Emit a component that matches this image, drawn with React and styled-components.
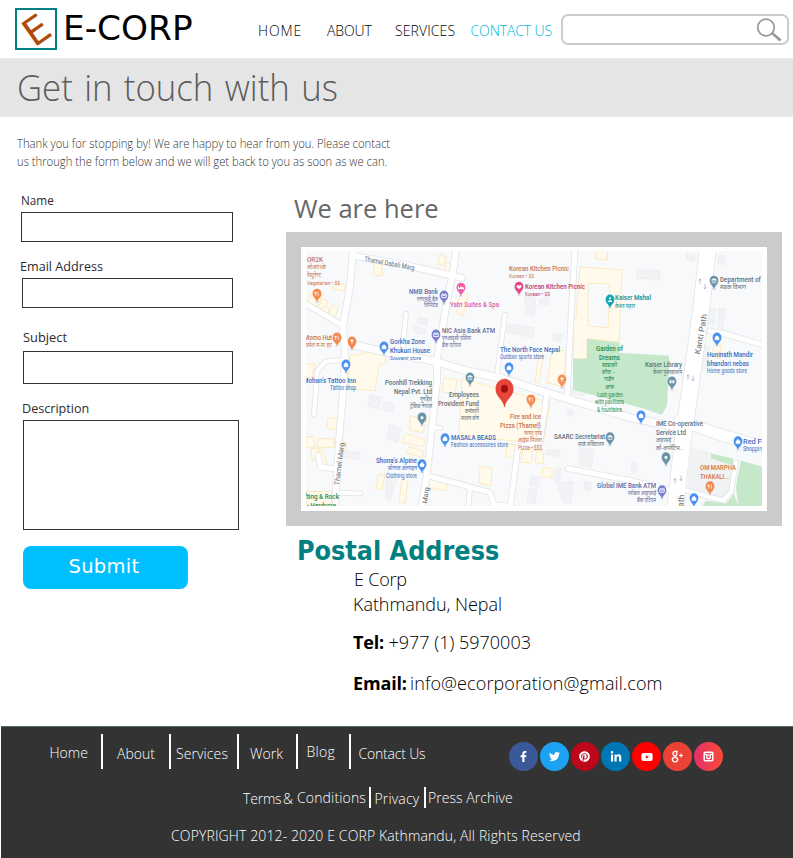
import React from "react";
import styled, { createGlobalStyle } from "styled-components";
import {
  FaFacebookF,
  FaTwitter,
  FaPinterest,
  FaLinkedinIn,
  FaYoutube,
} from "react-icons/fa";

const GlobalStyle = createGlobalStyle`
  *, *::before, *::after { box-sizing: border-box; }
  body { margin: 0; background: #fff; overflow: hidden; }
`;

const Page = styled.div`
  width: 793px;
  height: 858px;
  display: flex;
  flex-direction: column;
  background: #fff;
  color: #111;
  font-family: "Open Sans", "Noto Sans", sans-serif;
  overflow: hidden;
`;

/* ---------- header ---------- */

const Header = styled.header`
  flex: none;
  height: 58px;
  display: flex;
  align-items: flex-start;
`;

const LogoMark = styled.svg`
  flex: none;
  width: 42px;
  height: 42px;
  margin: 8px 0 0 15px;
`;

const Brand = styled.div`
  flex: none;
  width: 195px;
  margin: 9px 0 0 6px;
  font: 33px/40px "DejaVu Sans", sans-serif;
  color: #000;
  white-space: nowrap;
  transform: scaleX(1.04);
  transform-origin: left;
`;

const HeaderNav = styled.nav`
  flex: none;
  width: 303px;
  display: flex;
  padding-top: 21px;
`;

const HeaderLink = styled.a`
  flex: none;
  width: ${(p) => p.$w}px;
  font-size: 14px;
  line-height: 20px;
  font-weight: 300;
  letter-spacing: ${(p) => p.$ls}px;
  color: ${(p) => (p.$active ? "#00b7dc" : "#000")};
  white-space: nowrap;
`;

const SearchBox = styled.div`
  flex: none;
  width: 228px;
  height: 31px;
  margin-top: 14px;
  border: 2px solid #ccc;
  border-radius: 7px;
  display: flex;
  justify-content: flex-end;
  align-items: flex-start;
  padding: 2px 5px 0 0;
`;

const Banner = styled.div`
  flex: none;
  height: 59px;
  padding: 7px 0 0 17px;
  background: #e5e5e5;
  border-top: 1px solid #eaeaea;
  border-bottom: 1px solid #ededed;
`;

const BannerTitle = styled.h1`
  margin: 0;
  font-size: 36px;
  line-height: 44px;
  font-weight: 300;
  word-spacing: 2.4px;
  color: #5c5c5c;
  white-space: nowrap;
  transform: scaleX(0.965);
  transform-origin: left;
`;

/* ---------- main ---------- */

const Main = styled.main`
  flex: none;
  height: 609px;
  display: flex;
`;

const LeftColumn = styled.section`
  flex: none;
  width: 286px;
  padding-top: 18px;
`;

const Intro = styled.p`
  margin: 0 0 21px 17px;
  width: 440px;
  height: 35px;
  font-size: 13px;
  line-height: 17.5px;
  font-weight: 300;
  color: #333;
  white-space: nowrap;
  transform: scaleX(0.866);
  transform-origin: left;
`;

const Field = styled.div`
  height: ${(p) => p.$h}px;
  padding-left: ${(p) => p.$x}px;
`;

const FieldLabel = styled.label`
  display: block;
  height: ${(p) => p.$h}px;
  margin-left: ${(p) => p.$x}px;
  font-size: 13px;
  line-height: 18px;
  color: #2b2b2b;
  white-space: nowrap;
  transform: scaleX(${(p) => p.$fit});
  transform-origin: left;
`;

const TextInput = styled.input`
  display: block;
  width: ${(p) => p.$w}px;
  height: ${(p) => p.$h}px;
  border: 1px solid #333;
  border-radius: 0;
  background: #fff;
`;

const TextArea = styled.textarea`
  display: block;
  width: 216px;
  height: 110px;
  border: 1px solid #333;
  border-radius: 0;
  background: #fff;
  resize: none;
`;

const SubmitButton = styled.button`
  display: block;
  width: 165px;
  height: 43.5px;
  margin-left: 23px;
  padding: 0 3px 0 0;
  border: 0;
  border-radius: 8px;
  background: #00bfff;
  color: #fff;
  font: 19.5px/42px "DejaVu Sans", sans-serif;
  letter-spacing: 0.3px;
`;

const RightColumn = styled.section`
  flex: none;
  width: 507px;
  padding-top: 73px;
`;

const MapHeading = styled.h2`
  margin: 0 0 0 8px;
  height: 42px;
  font-size: 26px;
  line-height: 36px;
  font-weight: 400;
  color: #666;
  transform: scaleX(0.98);
  transform-origin: left;
`;

const MapFrame = styled.div`
  width: 496px;
  height: 294px;
  border: 15px solid #cbcbcb;
  background: #fff;
  padding: 3.5px 5px 0;
`;

const MapDrawing = styled.svg`
  display: block;
  width: 456px;
  height: 255.5px;
`;

const PostalHeading = styled.h3`
  margin: 9px 0 0 11px;
  height: 32px;
  font: bold 26px/32px "DejaVu Sans", sans-serif;
  color: #008080;
  white-space: nowrap;
  transform: scaleX(0.923);
  transform-origin: left;
`;

const ContactRow = styled.div`
  display: flex;
  height: ${(p) => p.$h}px;
  padding-left: ${(p) => p.$x}px;
  font-size: 18px;
  line-height: 24px;
  font-weight: 300;
  letter-spacing: ${(p) => p.$ls || 0}px;
  color: #000;
  white-space: nowrap;
`;

const ContactKey = styled.strong`
  flex: none;
  width: ${(p) => p.$w}px;
  font-weight: 700;
  letter-spacing: -0.15px;
`;

/* ---------- footer ---------- */

const Footer = styled.footer`
  flex: none;
  height: 132px;
  margin-left: 1px;
  background: #333;
  color: #fff;
  border-top: 1px solid #566;
`;

const FooterTop = styled.div`
  display: flex;
  height: 60px;
  padding-top: 7px;
`;

const FooterLinks = styled.div`
  display: flex;
  width: 508px;
`;

const FooterLink = styled.a`
  flex: none;
  width: ${(p) => p.$w}px;
  padding: ${(p) => p.$top}px 0 0 ${(p) => p.$x}px;
  font-size: 14px;
  line-height: 20px;
  font-weight: 300;
  letter-spacing: ${(p) => p.$ls || 0}px;
  white-space: nowrap;
`;

const Divider = styled.span`
  flex: none;
  width: 2px;
  height: ${(p) => p.$h}px;
  background: #fff;
`;

const SocialRow = styled.div`
  display: flex;
  gap: 2px;
  padding-top: 8px;
`;

const SocialBadge = styled.a`
  flex: none;
  width: 28.8px;
  height: 29px;
  border-radius: 50%;
  background: ${(p) => p.$bg};
  color: #fff;
  display: flex;
  align-items: center;
  justify-content: center;
`;

const LegalLinks = styled.div`
  display: flex;
  height: 39px;
  padding-left: 241px;
`;

const Copyright = styled.div`
  padding-left: 170px;
  font-size: 14px;
  line-height: 20px;
  font-weight: 300;
  letter-spacing: 0.12px;
  white-space: nowrap;
`;

/* ---------- map ---------- */

const ROADS = [
  [6, "353,248 350,285 343,325 345,352 344,380 340,427 337,470 335,510"],
  [6, "355,255 410,265 462,277"],
  [6, "456,248 453,272 448,295 437,358 437,380 432,427 427,473 421,510"],
  [5, "300,300 318,310 343,325"],
  [7, "345,342 385,351 437,361 462,369 503,378 547,392 630,417 675,426"],
  [11, "680,420 720,434 766,447"],
  [4, "406,313 402,353"],
  [4, "505,314 497,374"],
  [5, "575,248 571,317 568,380 567,396"],
  [5, "710,330 725,333 766,345"],
  [4, "345,359 325,361 317,371 314,414"],
  [5, "318,455 321,467 335,468"],
  [4, "336,492 360,493"],
  [5, "427,475 465,485 490,492 494,504 512,506"],
  [4, "470,488 468,510"],
  [5, "547,392 540,442 518,446 510,508"],
  [5, "568,468 630,480 676,491"],
  [4, "686,490 723,500 731,492 736,462"],
  [4, "433,427 440,427"],
];

const YELLOW = [
  "375,257 382,258 382,275 373,274",
  "440,253 446,256 443,265 438,263",
  "446,262 453,263 451,273 444,271",
  "322,298 328,300 324,310 318,307",
  "324,305 330,308 326,318 320,315",
  "332,304 338,307 334,320 328,316",
  "311,291 322,295 316,306 308,302",
  "335,282 346,284 344,290 333,288",
  "350,355 385,349 386,362 379,364 375,390 347,388",
  "304,363 315,363 312,377 304,377",
  "328,417 340,419 338,429 327,427",
  "306,436 314,436 314,447 306,447",
  "318,438 334,438 334,447 317,447",
  "311,448 318,448 318,459 312,459",
  "319,447 323,450 327,464 322,465",
  "343,442 346,442 345,451 341,451",
  "410,415 427,419 423,432 410,429",
  "406,433 425,439 423,446 402,442",
  "409,446 424,451 423,457 406,452",
  "378,474 385,474 382,489 376,488",
  "402,479 408,480 405,503 399,501",
  "428,476 448,480 446,490 427,487",
  "444,377 457,379 455,393 442,391",
  "462,378 550,402 543,443 459,435",
  "507,443 517,445 516,458 506,456",
  "523,446 532,448 531,462 521,462",
  "537,449 544,450 543,463 535,462",
  "480,466 492,467 491,485 479,483",
  "543,467 552,468 552,477 542,476",
  "539,353 543,354 539,382 535,381",
  "552,349 566,350 564,386 547,382",
  "597,248 608,248 607,259 596,258",
  "580,266 622,269 619,341 587,338 587,358 573,358 574,330 570,328 571,317 576,317",
  "714,343 721,345 720,358 712,355",
  "460,290 468,294 463,315 457,312",
  "306,491 332,491 332,504 306,504",
];

const GREY = [
  "419,316 428,319 427,325 417,322",
  "414,325 426,328 425,334 414,331",
  "370,394 382,397 379,409 368,405",
  "384,401 394,403 392,411 382,409",
  "390,424 401,428 397,442 387,438",
  "342,450 360,452 360,459 342,457",
  "387,476 397,478 390,500 385,496",
  "525,295 536,297 534,315 526,312",
  "540,298 548,298 548,304 539,303",
  "508,323 534,327 533,337 506,331",
  "554,333 562,334 562,341 553,339",
  "572,386 586,387 584,395 572,393",
  "568,409 574,411 572,416 567,414",
  "580,447 594,449 591,467 579,465",
  "546,449 560,450 560,456 546,454",
  "556,467 561,468 559,482 554,480",
  "531,475 540,477 538,487 530,485",
  "529,488 537,490 535,503 527,501",
  "557,483 573,481 571,503 563,502",
  "585,481 591,482 590,490 584,489",
  "637,269 660,270 660,279 637,277",
  "687,253 695,254 694,260 687,259",
  "719,254 725,255 724,264 718,262",
  "707,307 716,308 714,324 706,322",
  "719,307 725,308 722,328 718,326",
  "702,343 709,346 708,369 700,367",
  "632,461 637,462 635,473 631,471",
  "692,448 730,458 731,487 722,497 688,487",
];

const PINS = [
  [317, 293, "#f4884e", "fork"],
  [337, 337, "#f4884e", "fork"],
  [352, 341, "#f4884e", "cup"],
  [384, 346, "#4a90ee", "bag"],
  [346, 364, "#4a90ee", "bag"],
  [444, 295, "#7b80cf", "card"],
  [461, 287, "#ef5fab", "bed"],
  [436, 334, "#7b80cf", "card"],
  [519, 286, "#ea4583", "heart"],
  [610, 299, "#12a6b4", "person"],
  [714, 280, "#6c93a7", "bank"],
  [717, 337, "#4a90ee", "bag"],
  [509, 367, "#4a90ee", "bag"],
  [470, 377, "#6c93a7", "bank"],
  [562, 379, "#f6935b", "cup"],
  [531, 399, "#f4884e", "fork"],
  [422, 417, "#6c93a7", "dot"],
  [445, 438, "#4a90ee", "bag"],
  [422, 464, "#4a90ee", "bag"],
  [610, 437, "#6c93a7", "bank"],
  [672, 381, "#6c93a7", "book"],
  [641, 415, "#4a90ee", "bag"],
  [666, 457, "#6c93a7", "dot"],
  [738, 441, "#4a90ee", "bag"],
  [710, 486, "#f4884e", "fork"],
  [662, 490, "#7b80cf", "card"],
  [694, 498, "#4a90ee", "bag"],
];

const ORANGE = "#c8744f";
const BLUE = "#3a6cc0";
const SLATE = "#5b6f7b";
const PURPLE = "#666a9c";
const GREEN = "#258a4b";

/* text, left, baseline, width, font size, colour */
const LABELS = [
  ["OR2K", 307, 261, 16, 8, ORANGE],
  ["ओआर२के", 307, 268, 19, 6, ORANGE],
  ["रेस्टुरेन्ट", 307, 276, 14, 6, ORANGE],
  ["Vegetarian • $$", 307, 284, 33, 6, ORANGE],
  ["NMB Bank", 409, 293, 29, 8, PURPLE],
  ["एनएमबी बैंक", 417, 300, 21, 6, PURPLE],
  ["लिमिटेड", 424, 306, 14, 6, PURPLE],
  ["Yatri Suites & Spa", 450, 306, 49, 8, "#d85ba4"],
  ["NIC Asia Bank ATM", 442, 332, 53, 8, PURPLE],
  ["एनआइसी एसिया", 442, 339, 29, 6, PURPLE],
  ["बैंक एटीएम", 442, 346, 19, 6, PURPLE],
  ["Momo Hut", 304, 339, 28, 8, ORANGE],
  ["ठमेल म.मः हट", 305, 346, 27, 6, ORANGE],
  ["Gorkha Zone", 390, 343, 35, 8, BLUE],
  ["Khukuri House", 390, 352, 40, 8, BLUE],
  ["Souvenir store", 390, 359, 31, 6, BLUE],
  ["Korean Kitchen Picnic", 509, 270, 60, 8, ORANGE],
  ["Korean • $$", 509, 277, 25, 6, ORANGE],
  ["Korean Kitchen Picnic", 525, 288, 60, 8, "#bd376d"],
  ["Korean • $$", 525, 295, 25, 6, "#bd376d"],
  ["Kaiser Mahal", 615, 299.5, 36, 8, "#108d92"],
  ["केशर महल", 615, 307, 20, 6, "#108d92"],
  ["Department of Roads", 720, 281, 60, 8, SLATE],
  ["सडक विभाग", 720, 288, 26, 6, SLATE],
  ["The North Face Nepal", 500, 351, 60, 8, BLUE],
  ["Outdoor sports store", 500, 358.5, 44, 6.5, BLUE],
  ["Garden of", 596, 350, 27, 8, GREEN],
  ["Dreams", 599, 359, 21, 8, GREEN],
  ["स्वप्नको", 602, 366, 15, 6, GREEN],
  ["बगैंचा –", 602, 373, 13, 6, GREEN],
  ["गार्डेन", 604, 380, 10, 6, GREEN],
  ["अफ", 605, 388, 9, 6, GREEN],
  ["Lush garden", 597, 396, 26, 6.5, GREEN],
  ["with pavilions", 595, 403.5, 29, 6.5, GREEN],
  ["& fountains", 597, 411, 25, 6.5, GREEN],
  ["Kaiser Library", 645, 366, 37, 8, SLATE],
  ["केशर पुस्तकालय", 653, 373, 29, 6, SLATE],
  ["Huninath Mandir", 707, 356, 46, 8, BLUE],
  ["bhandari nebas", 707, 365, 42, 8, BLUE],
  ["Home goods store", 707, 372.5, 40, 6.5, BLUE],
  ["Mohan's Tattoo Inn", 303, 382, 53, 8, BLUE],
  ["Tattoo shop", 330, 389, 26, 6.5, BLUE],
  ["Poonhill Trekking", 385, 384, 47, 8, SLATE],
  ["Nepal Pvt. Ltd", 394, 393, 38, 8, SLATE],
  ["पूनहिल", 420, 400, 12, 6, SLATE],
  ["ट्रेकिङ नेपाल", 410, 407, 22, 6, SLATE],
  ["Employees", 449, 396, 30, 8, SLATE],
  ["Provident Fund", 438, 405, 41, 8, SLATE],
  ["कर्मचारी", 465, 412, 14, 6, SLATE],
  ["सञ्चय कोष", 461, 419, 18, 6, SLATE],
  ["Fire and Ice", 510, 418, 31, 8, ORANGE],
  ["Pizza (Thamel)", 500, 427, 41, 8, ORANGE],
  ["फायर एण्ड", 524, 434, 18, 5.5, ORANGE],
  ["आईस पिज्जा", 518, 441, 24, 5.5, ORANGE],
  ["Pizza • $$$", 518, 449, 24, 6.5, ORANGE],
  ["MASALA BEADS", 451, 439, 45, 8, BLUE],
  ["Fashion accessories store", 451, 446.5, 57, 6.5, BLUE],
  ["SAARC Secretariat", 554, 438, 51, 8, SLATE],
  ["सार्क सचिवालय", 578, 445, 26, 6, SLATE],
  ["Shona's Alpine", 376, 462, 41, 8, BLUE],
  ["सोनाज अल्पाइन", 388, 469, 29, 6, BLUE],
  ["Clothing store", 386, 477, 31, 6.5, BLUE],
  ["IME Co-operative", 656, 425, 47, 8, SLATE],
  ["Service Ltd", 656, 434, 30, 8, SLATE],
  ["आइएमई", 656, 441, 15, 6, SLATE],
  ["को-अपरेटिभ...", 656, 449, 28, 6, SLATE],
  ["Red Fort", 743, 443, 28, 8, BLUE],
  ["Shopping", 743, 450.5, 22, 6.5, BLUE],
  ["OM MARPHA", 700, 469, 36, 8, "#d8703d"],
  ["THAKALI...", 700, 478, 29, 8, "#d8703d"],
  ["Global IME Bank ATM", 597, 487.5, 59, 8, PURPLE],
  ["ग्लोबल आइएमई", 628, 494, 28, 6, PURPLE],
  ["बैंक एटिएम", 637, 502, 19, 6, PURPLE],
  ["Rafting & Rock", 297, 498.5, 42, 8, GREEN],
  ["- Hardcore", 307, 507.5, 29, 8, GREEN],
];

/* text, x, y, angle, width, font size */
const STREETS = [
  ["Thamel Dabali Marg", 364, 260, 10.5, 51, 7],
  ["Kanti Path", 700, 354, -80, 41, 8],
  ["Thamel Marg", 339, 485, -83, 43, 7],
  ["Marg", 427, 503, -82, 16, 7],
  ["Kanti Path", 680, 535, -84, 41, 8],
];

const GLYPHS = {
  fork: <path d="M-1.4,-2v1.6M-1.4,-.4v2.6M1.2,-2.2v4.4M-.6,-2v1.4h-1.6v-1.4" fill="none" stroke="#fff" strokeWidth=".7" />,
  cup: <path d="M-2,-2h4L.4,.2v1.8h-.8V.2z" fill="#fff" />,
  bag: <path d="M-2,-.6h4v2.6h-4zM-1,-.6v-1.2h2v1.2" fill="#fff" stroke="#fff" strokeWidth=".6" />,
  card: <path d="M-2.2,-1.7h4.4v3.4h-4.4zM-1.4,-.5h2.8" fill="none" stroke="#fff" strokeWidth=".9" />,
  bed: <path d="M-2.4,-1.5v3M-2.4,.6h4.8M2.4,-.4v2M-1,-.6h3" fill="none" stroke="#fff" strokeWidth="1" />,
  heart: <path d="M0,2.4L-2.4,0C-3,-2 -.8,-2.6 0,-1C.8,-2.6 3,-2 2.4,0z" fill="#fff" />,
  person: <path d="M-1.1,-1.6a1.1,1.1 0 1 0 2.2,0a1.1,1.1 0 1 0 -2.2,0M-2.2,2.2c0,-2.4 4.4,-2.4 4.4,0z" fill="#fff" />,
  bank: <path d="M-2.4,-1L0,-2.4L2.4,-1zM-1.8,-.6v2M0,-.6v2M1.8,-.6v2M-2.4,1.8h4.8" fill="#fff" stroke="#fff" strokeWidth=".6" />,
  book: <path d="M-2.4,-1.6h2v3.2h-2zM.4,-1.6h2v3.2h-2z" fill="#fff" />,
  dot: <circle r="1.5" fill="#fff" />,
};

function Pin({ x, y, color, kind }) {
  return (
    <g transform={`translate(${x} ${y})`}>
      <ellipse cy="8" rx="2" ry="1" fill="#c9d4e6" opacity=".6" />
      <path d="M0,8.4C-.8,5 -4.4,3.6 -4.4,-.4A4.4,4.9 0 0 1 4.4,-.4C4.4,3.6 .8,5 0,8.4z" fill={color} />
      {GLYPHS[kind]}
    </g>
  );
}

function StreetMap() {
  const kanti = "708,246 701,310 694,360 690,390 683,437 675,510";
  return (
    <MapDrawing
      viewBox="306 250 456 256"
      preserveAspectRatio="none"
      fontFamily="Roboto, 'Noto Sans', sans-serif"
    >
      <rect x="306" y="250" width="456" height="256" fill="#f8f9fb" />
      {GREY.map((p) => (
        <polygon key={p} points={p} fill="#f0f2f4" stroke="#e8eaed" strokeWidth=".6" />
      ))}
      {YELLOW.map((p) => (
        <polygon key={p} points={p} fill="#fffaec" stroke="#fde8b8" strokeWidth=".9" />
      ))}
      <polygon points="588,282 610,283 608,327 588,325" fill="#f8f9fb" stroke="#fde8b8" strokeWidth=".9" />
      <g fill="#c6e8ca">
        <polygon points="587,338 620,342 619,352 669,355 669,371 667,405 662,414 641,407 573,389 573,358 587,358" />
        <polygon points="711,453 733,458 733,465 711,458" />
        <polygon points="741,460 762,466 762,506 738,506 736,485" />
        <polygon points="706,500 726,503 734,493 738,506 702,506" />
      </g>
      <g fill="none" strokeLinecap="round" strokeLinejoin="round">
        {ROADS.map(([w, p]) => (
          <polyline key={p} points={p} stroke="#e1e4e8" strokeWidth={w + 1.6} />
        ))}
        <polyline points={kanti} stroke="#e1e4e8" strokeWidth="17.6" />
        {ROADS.map(([w, p]) => (
          <polyline key={p} points={p} stroke="#fff" strokeWidth={w} />
        ))}
        <polyline points={kanti} stroke="#fff" strokeWidth="16" />
      </g>
      <path
        d="M700,283v-5m-1.4,1.6l1.4,-1.6l1.4,1.6M705,283v5m-1.4,-1.6l1.4,1.6l1.4,-1.6M688,379v-5m-1.4,1.6l1.4,-1.6l1.4,1.6M693,375v5m-1.4,-1.6l1.4,1.6l1.4,-1.6M675,483v-5m-1.4,1.6l1.4,-1.6l1.4,1.6M681,475v5m-1.4,-1.6l1.4,1.6l1.4,-1.6"
        fill="none"
        stroke="#a9aecb"
        strokeWidth=".8"
      />
      {STREETS.map(([t, x, y, a, w, s], i) => (
        <text
          key={i}
          transform={`translate(${x} ${y}) rotate(${a})`}
          fontSize={s}
          fill="#686c70"
          textLength={w}
          lengthAdjust="spacingAndGlyphs"
        >
          {t}
        </text>
      ))}
      {PINS.map(([x, y, color, kind]) => (
        <Pin key={`${x}-${y}`} x={x} y={y} color={color} kind={kind} />
      ))}
      {LABELS.map(([t, x, y, w, s, c], i) => (
        <text
          key={i}
          x={x}
          y={y}
          fontSize={s}
          fontWeight={s === 8 ? 500 : 400}
          fill={c}
          textLength={w}
          lengthAdjust="spacingAndGlyphs"
        >
          {t}
        </text>
      ))}
      <path
        d="M504.500,406.500C503.300,398 495.800,396.500 495.800,388A8.700,9.800 0 0 1 513.200,388C513.200,396.500 505.700,398 504.500,406.500z"
        fill="#e8453a"
        stroke="#cf3a30"
        strokeWidth=".5"
      />
      <ellipse cx="504.500" cy="388" rx="3.500" ry="4" fill="#a00f0c" />
    </MapDrawing>
  );
}

/* ---------- social icons ---------- */

function GooglePlusIcon() {
  return (
    <svg width="12" height="13" viewBox="0 0 12 13" fill="none" stroke="#fff" strokeWidth="1.3">
      <ellipse cx="4" cy="3.600" rx="2" ry="2.300" />
      <ellipse cx="4" cy="9.600" rx="2.700" ry="2.200" />
      <path d="M4.500 1.200H7M5 5.800l-1.500 1.500M8 5.500h4M10 3.500v4" strokeWidth="1.100" />
    </svg>
  );
}

function CameraIcon() {
  return (
    <svg width="11" height="11" viewBox="0 0 11 11" fill="none" stroke="#fff">
      <rect x="1.200" y="1.200" width="8.600" height="8.600" rx="1" strokeWidth="1.500" />
      <path d="M1 3.300h3M7 3.300h3" strokeWidth="1.200" />
      <circle cx="5.500" cy="5.800" r="1.900" strokeWidth="1.300" />
    </svg>
  );
}

const SOCIAL = [
  ["facebook", "#3b5998", FaFacebookF, 11],
  ["twitter", "#1da1f2", FaTwitter, 11],
  ["pinterest", "#bd081c", FaPinterest, 11],
  ["linkedin", "#0077b5", FaLinkedinIn, 12],
  ["youtube", "#ff0000", FaYoutube, 12],
  ["google plus", "#ea4335", GooglePlusIcon],
  ["instagram", "linear-gradient(90deg, #e1306c, #fd4a35)", CameraIcon],
];

/* ---------- page ---------- */

export default function App() {
  return (
    <Page>
      <GlobalStyle />
      <Header>
        <LogoMark viewBox="0 0 42 42">
          <rect x="1" y="1" width="40" height="40" fill="#fff" stroke="#008080" strokeWidth="2" />
          <text
            x="-3.7"
            transform="translate(22.3 38) rotate(-35)"
            fontFamily="DejaVu Sans"
            fontSize="38"
            fill="#b04a05"
          >
            E
          </text>
        </LogoMark>
        <Brand>E-CORP</Brand>
        <HeaderNav>
          <HeaderLink $w={69} $ls={0.9}>HOME</HeaderLink>
          <HeaderLink $w={68} $ls={-0.1}>ABOUT</HeaderLink>
          <HeaderLink $w={75.5} $ls={0.1}>SERVICES</HeaderLink>
          <HeaderLink $w={85} $ls={-0.1} $active>CONTACT US</HeaderLink>
        </HeaderNav>
        <SearchBox>
          <svg width="26" height="24" viewBox="0 0 26 24" fill="none" stroke="#999">
            <circle cx="10" cy="9.500" r="8.300" strokeWidth="1.700" />
            <path d="M16 15l8.500 7.500" strokeWidth="2.800" />
          </svg>
        </SearchBox>
      </Header>

      <Banner>
        <BannerTitle>Get in touch with us</BannerTitle>
      </Banner>

      <Main>
        <LeftColumn>
          <Intro>
            Thank you for stopping by! We are happy to hear from you. Please contact
            <br />
            us through the form below and we will get back to you as soon as we can.
          </Intro>
          <Field $h={66} $x={21}>
            <FieldLabel $h={21} $x={0} $fit={0.9}>Name</FieldLabel>
            <TextInput $w={212} $h={30} />
          </Field>
          <Field $h={71} $x={22}>
            <FieldLabel $h={21} $x={-2.5} $fit={0.97}>Email Address</FieldLabel>
            <TextInput $w={211} $h={30} />
          </Field>
          <Field $h={71} $x={23}>
            <FieldLabel $h={23} $x={0} $fit={0.99}>Subject</FieldLabel>
            <TextInput $w={210} $h={33} />
          </Field>
          <Field $h={146.5} $x={23}>
            <FieldLabel $h={21} $x={-1.5} $fit={0.97}>Description</FieldLabel>
            <TextArea />
          </Field>
          <SubmitButton>Submit</SubmitButton>
        </LeftColumn>
        <RightColumn>
          <MapHeading>We are here</MapHeading>
          <MapFrame>
            <StreetMap />
          </MapFrame>
          <PostalHeading>Postal Address</PostalHeading>
          <ContactRow $h={25} $x={68} $ls={-0.2}>E Corp</ContactRow>
          <ContactRow $h={38} $x={67} $ls={-0.05}>Kathmandu, Nepal</ContactRow>
          <ContactRow $h={41} $x={67}>
            <ContactKey $w={35.5}>Tel:</ContactKey>+977 (1) 5970003
          </ContactRow>
          <ContactRow $h={24} $x={67} $ls={0.1}>
            <ContactKey $w={57}>Email:</ContactKey>info@ecorporation@gmail.com
          </ContactRow>
        </RightColumn>
      </Main>

      <Footer>
        <FooterTop>
          <FooterLinks>
            <FooterLink $w={100} $x={48.5} $top={9}>Home</FooterLink>
            <Divider $h={35} />
            <FooterLink $w={66} $x={14} $top={10}>About</FooterLink>
            <Divider $h={35} />
            <FooterLink $w={66} $x={5} $top={10} $ls={0.1}>Services</FooterLink>
            <Divider $h={35} />
            <FooterLink $w={57} $x={11} $top={10}>Work</FooterLink>
            <Divider $h={35} />
            <FooterLink $w={51} $x={8.5} $top={8} $ls={0.3}>Blog</FooterLink>
            <Divider $h={35} />
            <FooterLink $w={80} $x={7.5} $top={10} $ls={-0.2}>Contact Us</FooterLink>
          </FooterLinks>
          <SocialRow>
            {SOCIAL.map(([name, bg, Icon, size]) => (
              <SocialBadge key={name} $bg={bg} aria-label={name}>
                <Icon size={size} />
              </SocialBadge>
            ))}
          </SocialRow>
        </FooterTop>
        <LegalLinks>
          <FooterLink $w={41} $x={1} $top={2} $ls={-0.2}>Terms</FooterLink>
          <FooterLink $w={14} $x={0} $top={2}>&amp;</FooterLink>
          <FooterLink $w={72} $x={0} $top={1} $ls={0.15}>Conditions</FooterLink>
          <Divider $h={21} />
          <FooterLink $w={52.5} $x={3.5} $top={2} $ls={0.15}>Privacy</FooterLink>
          <Divider $h={21} />
          <FooterLink $w={90} $x={2.5} $top={1} $ls={0.05}>Press Archive</FooterLink>
        </LegalLinks>
        <Copyright>COPYRIGHT 2012- 2020 E CORP Kathmandu, All Rights Reserved</Copyright>
      </Footer>
    </Page>
  );
}
